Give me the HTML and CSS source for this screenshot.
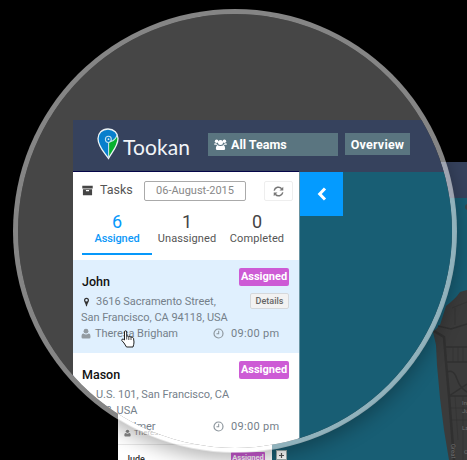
FILE: index.html
```html
<!DOCTYPE html>
<html lang="en">
<head>
<meta charset="utf-8">
<title>Tookan</title>
<link rel="stylesheet" href="styles.css">
</head>
<body>
<svg class="defs" width="0" height="0">
  <defs>
    <symbol id="user" viewBox="0 0 12 12"><circle cx="6" cy="3.2" r="2.9"/><path d="M3 6C1 6.2 .6 8 .6 10.2Q.6 12 2.2 12H9.8Q11.4 12 11.4 10.2C11.4 8 11 6.200 9 6Q6 8.200 3 6Z"/></symbol>
    <symbol id="clock" viewBox="0 0 12 12"><circle cx="6" cy="6" r="4.900" fill="none" stroke="currentColor" stroke-width="1.300"/><path d="M6.200 3V6.400H3.800" fill="none" stroke="currentColor" stroke-width="1.100"/></symbol>
    <symbol id="pin" viewBox="0 0 8 12"><path fill-rule="evenodd" d="M4 1A3 3 0 0 1 7 4C7 6 5 8 4.500 11H3.500C3 8 1 6 1 4A3 3 0 0 1 4 1ZM4 2.500A1.500 1.500 0 1 0 4 5.500A1.500 1.500 0 1 0 4 2.500Z"/></symbol>
  </defs>
</svg>

<div class="page">
  <div class="page-header"></div>
  <div class="page-body">
    <div class="page-list">
      <div class="small-person"><svg class="icon-s"><use href="#user"/></svg><span>Theresa</span></div>
      <div class="small-task"><b>Jude</b><span class="small-badge">Assigned</span></div>
    </div>
    <div class="page-map">
      <svg class="map-art" viewBox="272 198 195 262">
        <path d="M467 290L460 292C456 298 451 302 446 306L440 325L433 332L436 345L437 365L440 398L444 430L449 460H467Z" fill="#3b3b3b"/>
        <g fill="none" stroke="#303030" stroke-width="1.500">
          <path d="M434 331L444 337L446 362L449 396L454 460" stroke-width="2.500"/>
          <path d="M438 326L451 329L467 324M446 347H467M447 362H467M447 372Q454 369 457 379Q460 388 467 392M449 396L467 384M449 396H467"/>
          <path d="M453 347V362M458 347V362M463 347V362M455 396L458 440M463 396V460M450 408H467M451 420H467M452 308L467 302M455 308V325" stroke-width=".6"/>
        </g>
        <circle cx="468" cy="207" r="3" fill="#3b4649"/>
        <g class="map-text"><text x="462" y="405">In</text><text x="462" y="413">Ju</text><text x="462" y="430">La</text><text x="464" y="454">O</text><text transform="translate(451 444) rotate(88)">Great</text></g>
      </svg>
      <div class="zoom-in"><svg viewBox="0 0 9 9"><path d="M4.500 2V7M2 4.500H7" stroke="#555" stroke-width="1.200"/></svg></div>
    </div>
  </div>
</div>

<div class="lens">
  <div class="app">
    <header class="bar">
      <div class="brand">
        <svg class="logo" viewBox="0 0 22 32">
          <path d="M11 1C5 1 1 5.200 1 10.500C1 19 8 25 11.500 30.500C15 24 21 18 21 10.500C21 5 17 1 11 1Z" fill="#087fcc"/>
          <path d="M20.400 7C19 10.500 14.500 12 12 14.500L11.500 30C15 24 21 18 21 10.500Z" fill="#08b02e"/>
          <path d="M11 1C5 1 1 5.200 1 10.500C1 19 8 25 11.500 30.500C15 24 21 18 21 10.500C21 5 17 1 11 1Z" fill="none" stroke="#edf3f5" stroke-width="1.300"/>
          <path d="M11.600 30V14.500M14 13.500C17 12.500 19.300 10 20.200 6.500M11.600 14.500C7.200 14.200 7.500 8.200 11.500 8.200C15 8.200 15.300 13.500 11.800 14.500" fill="none" stroke="#c3e2ef" stroke-width="1.100"/>
          <circle cx="11.500" cy="11.200" r=".9" fill="#d8edf5"/>
        </svg>
        <span>Tookan</span>
      </div>
      <div class="teams">
        <svg viewBox="0 0 14 13"><circle cx="2.800" cy="3" r="1.900"/><circle cx="11.200" cy="3" r="1.900"/><circle cx="7" cy="4.300" r="2.700"/><path d="M.3 5.300Q3 4.600 4 6.800H.3ZM13.700 5.300Q11 4.600 10 6.800H13.700ZM3.500 7Q7 9 10.500 7Q12 8 12 11Q12 12.500 10.500 12.500H3.500Q2 12.500 2 11Q2 8 3.500 7Z"/></svg>
        <span>All Teams</span>
      </div>
      <div class="overview"><span>Overview</span></div>
    </header>
    <div class="content">
      <aside class="side">
        <div class="tools">
          <svg class="archive" viewBox="0 0 12 11"><path fill-rule="evenodd" d="M.3 .3H11.700V3.300H.3ZM1 4H11V10.700H1ZM4.300 5V6.300H7.700V5Z"/></svg>
          <span class="tasks">Tasks</span>
          <span class="date"><span>06-August-2015</span></span>
          <span class="refresh"><svg viewBox="0 0 12 12"><path d="M1.300 5A4.700 4.700 0 0 1 9.500 3M10.700 7A4.700 4.700 0 0 1 2.500 9" fill="none" stroke="#777" stroke-width="1.600"/><path d="M11.200 .8V4.900H7.100ZM.8 11.200V7.100H4.900Z" fill="#777"/></svg></span>
        </div>
        <nav class="tabs">
          <div class="tab active"><b>6</b><span>Assigned</span></div>
          <div class="tab"><b>1</b><span>Unassigned</span></div>
          <div class="tab"><b>0</b><span>Completed</span></div>
        </nav>
        <article class="task selected">
          <div class="top"><h2>John</h2><span class="badge">Assigned</span></div>
          <div class="addr"><svg class="pin"><use href="#pin"/></svg><span>3616 Sacramento Street,</span><button class="details">Details</button></div>
          <div class="line2">San Francisco, CA 94118, USA</div>
          <div class="who"><svg class="icon"><use href="#user"/></svg><span class="name">Theresa Brigham</span><svg class="icon clock"><use href="#clock"/></svg><span class="time">09:00 pm</span></div>
        </article>
        <article class="task">
          <div class="top"><h2>Mason</h2><span class="badge">Assigned</span></div>
          <div class="addr"><svg class="pin"><use href="#pin"/></svg><span>U.S. 101, San Francisco, CA</span></div>
          <div class="line2">94128, USA</div>
          <div class="who"><svg class="icon"><use href="#user"/></svg><span class="name">Jack Palmer</span><svg class="icon clock"><use href="#clock"/></svg><span class="time">09:00 pm</span></div>
        </article>
      </aside>
      <div class="map"><div class="collapse"><svg viewBox="0 0 10 14"><path d="M8 1.500L2.700 7L8 12.500" fill="none" stroke="#fff" stroke-width="3"/></svg></div></div>
    </div>
  </div>
</div>
<svg class="cursor" viewBox="0 0 14 18"><path d="M3.500 10V2Q3.500 .8 4.600 .8Q5.700 .8 5.700 2V6.500Q6.700 5.500 7.700 6.700Q9 5.800 9.900 7.200Q11.500 6.500 12.500 8.300L13 12Q13 14 12 17H5.500L3 13L.8 10.500Q.6 8.500 2.300 9.200Z" fill="#fff" stroke="#222"/><path d="M5.700 6.500V9.500M7.800 7V10M10 7.300V10" stroke="#222" stroke-width=".8"/></svg>
</body>
</html>
```
FILE: styles.css
```css
* { box-sizing: border-box; }
body {
  margin: 0;
  width: 467px;
  height: 460px;
  overflow: hidden;
  position: relative;
  background: #000;
  font-family: Roboto, "Liberation Sans", sans-serif;
}
svg { display: block; flex: none; }
.defs { position: absolute; }

/* full-size app behind the lens */
.page { padding: 162px 0 0 118px; height: 460px; }
.page-header { height: 36px; background: #36425d; }
.page-body { display: flex; height: 262px; }
.page-list { width: 154px; background: #fff; padding-top: 228px; }
.small-person { display: flex; height: 19px; padding-left: 6px; gap: 3px; font-size: 8px; line-height: 14px; color: #888; border-bottom: 1px solid #e8e8e8; }
.icon-s { width: 7px; height: 8px; margin-top: 3px; fill: #888; }
.small-task { display: flex; height: 15px; padding: 7px 7px 0 7px; justify-content: space-between; font-size: 9px; line-height: 11px; color: #333; }
.small-task b { padding-top: 2px; font-weight: 500; }
.small-badge { width: 34px; height: 12px; line-height: 12px; background: #cd5bd5; color: #fff; font-size: 7.5px; font-weight: 700; text-align: center; border-radius: 1px; }
.page-map { position: relative; flex: 1; background: #185e74; }
.map-art { width: 195px; height: 262px; }
.map-text { font-size: 6px; fill: #707070; }
.zoom-in { position: absolute; left: 4px; top: 252px; width: 11px; height: 10px; background: #fff; border: 1px solid #9aa; }
.zoom-in svg { width: 9px; height: 9px; }

/* magnifier */
.lens {
  position: absolute;
  left: 13px;
  top: 9px;
  width: 444px;
  height: 444px;
  border: 5px solid rgba(255, 255, 255, .52);
  border-radius: 50%;
  background: #464646;
  background-clip: padding-box;
  overflow: hidden;
  box-shadow: 0 6px 20px rgba(0, 0, 0, .3);
}
.app { margin: 106px 0 0 55px; width: 400px; }
.bar { display: flex; height: 52px; background: #36425d; align-items: flex-start; }
.brand { display: flex; width: 135px; padding: 8px 0 0 24px; gap: 4px; }
.logo { width: 22px; height: 32px; }
.brand span { font: 400 21px/37px Lato, sans-serif; color: #f1f4f8; letter-spacing: .1px; }
.teams { display: flex; width: 130px; height: 23px; margin: 13px 7px 0 0; padding-left: 6px; gap: 4px; align-items: center; background: #5a7580; }
.teams svg { width: 13px; height: 13px; fill: #fff; }
.teams span, .overview span { color: #fff; font-size: 12.500px; font-weight: 700; }
.overview span { letter-spacing: .2px; }
.overview { width: 65px; height: 22px; line-height: 21px; margin-top: 13px; text-align: center; background: #5a7580; }

.content { display: flex; height: 320px; }
.side { width: 226px; background: #fff; box-shadow: 0 -1px #050548; }
.tools { display: flex; height: 37px; padding: 9px 6px 0 9px; }
.archive { width: 11px; height: 11px; margin-top: 4px; fill: #454545; }
.tasks { width: 44px; margin-left: 7px; font-size: 12.500px; line-height: 18px; color: #555; }
.date { width: 102px; height: 20px; border: 1px solid #aaa; border-radius: 2px; text-align: center; font-size: 11px; line-height: 18px; color: #888; }
.refresh { display: flex; width: 29px; height: 20px; margin-left: 18px; border: 1px solid #eee; border-radius: 2px; align-items: center; justify-content: center; }
.refresh svg { width: 11px; height: 11px; }
.tabs { display: flex; height: 51px; padding: 3px 6px 0 9px; }
.tab { width: 70px; height: 42.500px; display: flex; flex-direction: column; align-items: center; color: #555; }
.tab b { font-size: 18px; line-height: 19px; font-weight: 400; color: #444; }
.tab span { font-size: 11px; line-height: 15px; letter-spacing: .1px; }
.tab.active { color: #0d98f8; border-bottom: 2px solid #0698fa; }
.tab.active b { color: #0698fa; }
.tab.active span { font-weight: 500; letter-spacing: -.1px; }

.task { height: 93px; padding: 8px 10px 0 9px; }
.task.selected { background: #e0f0fe; }
.top { display: flex; height: 26px; justify-content: space-between; }
h2 { margin: 4px 0 0; font-size: 12.500px; line-height: 19px; font-weight: 500; color: #111; }
.badge { width: 50px; height: 18px; line-height: 18px; border-radius: 2px; background: #cd5bd5; color: #fff; text-align: center; font-size: 11px; font-weight: 700; }
.addr, .line2, .who { margin-left: -1px; font-size: 11px; line-height: 15px; color: #75808a; white-space: nowrap; letter-spacing: -.03px; }
.addr { display: flex; height: 15px; }
.pin { width: 7px; height: 10px; margin: 3px 6px 0 2px; fill: #333; }
.details { width: 39px; height: 16px; margin: -1px 0 0 auto; padding: 0; border: 1px solid #d5d8db; border-radius: 2px; background: #f2f2f2; font: 500 9px/13px Roboto, sans-serif; color: #666; }
.line2 { height: 17px; padding-top: 1px; letter-spacing: -.03px; }
.who { display: flex; }
.icon { width: 10px; height: 11px; margin: 2px 4px 0 0; fill: #929ba1; color: #8d969d; }
.name { width: 118px; }
.icon.clock { width: 11px; margin-right: 7px; }
.time { letter-spacing: .3px; }
.map { flex: 1; background: #185e74; border-left: 1px solid #6994a2; }
.collapse { width: 43px; height: 44px; display: flex; align-items: center; justify-content: center; background: #049bff; }
.collapse svg { width: 10px; height: 14px; }
.cursor { position: absolute; left: 121px; top: 330px; width: 14px; height: 18px; }
```
